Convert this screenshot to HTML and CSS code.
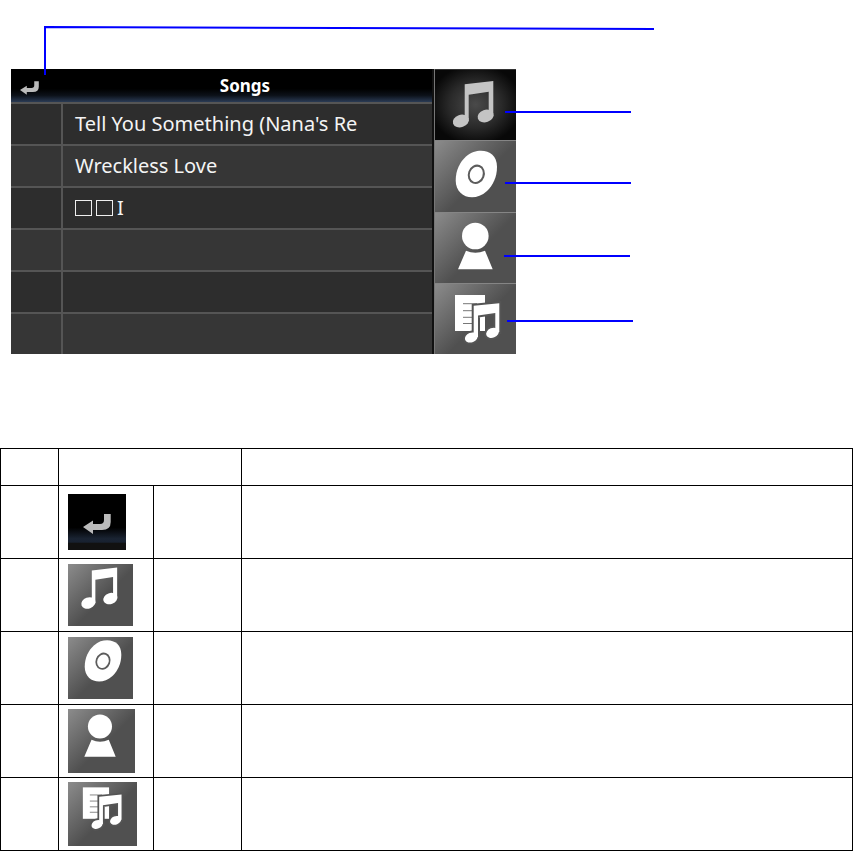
FILE: index.html
```html
<!DOCTYPE html>
<html lang="en">
<head>
<meta charset="utf-8">
<title>Songs</title>
<link rel="stylesheet" href="styles.css">
</head>
<body>
<svg class="sprite" aria-hidden="true">
  <defs>
    <g id="return">
      <path d="M0 13 10 6.5V10H17Q21 10 21 6V0H27.7V8Q27.7 16 19 16H10V20Z"/>
    </g>
    <g id="note">
      <path d="M29.7 15.3 58.3 12V47H53.7V22.7L33.7 25.7V52H29.7Z"/>
      <ellipse cx="25.8" cy="52" rx="8.2" ry="6.2" transform="rotate(-20 25.8 52)"/>
      <ellipse cx="50.6" cy="47" rx="8.2" ry="6.2" transform="rotate(-20 50.6 47)"/>
    </g>
    <g id="disc">
      <path d="M46 10.7C55 10.7 62 16 62 27C62 37 58 45 52 51C47 55.5 42 57.3 37 57.3C28 57.3 20.7 51 20.7 40.5C20.7 30 25 22 31 16.5C36 12 41 10.7 46 10.7Z"/>
      <ellipse class="ring" cx="41.3" cy="34.3" rx="7.4" ry="8.8" transform="rotate(20 41.3 34.3)"/>
    </g>
    <g id="person">
      <circle cx="40.3" cy="24" r="13.3"/>
      <path d="M31 38.7Q40.3 43 50 38.7L57.7 57.3H23Z"/>
    </g>
    <g id="playlist">
      <path d="M20 12H50V48H20Z"/>
      <path class="rule" d="M28 20.7H42M28 27.7H38M28 34.3H38M28 40.5H38"/>
      <g class="outline">
        <path d="M38.7 22.7 64.3 20.3V49H60.3V30L43 32.5V54H38.7Z"/>
        <ellipse cx="36.3" cy="54.5" rx="6.6" ry="4.8" transform="rotate(-22 36.3 54.5)"/>
        <ellipse cx="57.5" cy="49.8" rx="6.6" ry="4.8" transform="rotate(-22 57.5 49.8)"/>
      </g>
      <path d="M38.7 22.7 64.3 20.3V49H60.3V30L43 32.5V54H38.7Z"/>
      <ellipse cx="36.3" cy="54.5" rx="6.6" ry="4.8" transform="rotate(-22 36.3 54.5)"/>
      <ellipse cx="57.5" cy="49.8" rx="6.6" ry="4.8" transform="rotate(-22 57.5 49.8)"/>
    </g>
  </defs>
</svg>

<figure class="figure">
  <div class="device">
    <section class="screen">
      <header class="titlebar">
        <button class="back" type="button" aria-label="Back"><svg class="glyph back-icon" viewBox="0 0 28 20"><use href="#return"/></svg></button>
        <h1 class="title">Songs</h1>
      </header>
      <ul class="songs">
        <li class="song"><span class="name">Tell You Something (Nana's Re</span></li>
        <li class="song"><span class="name">Wreckless Love</span></li>
        <li class="song"><span class="name"><i class="box"></i><i class="box"></i>I</span></li>
        <li class="song"><span class="name"></span></li>
        <li class="song"><span class="name"></span></li>
        <li class="song"><span class="name"></span></li>
      </ul>
    </section>
    <nav class="tabs">
      <button class="tab active" type="button" aria-label="Songs"><svg class="glyph" viewBox="0 0 81 71"><use href="#note"/></svg></button>
      <button class="tab" type="button" aria-label="Albums"><svg class="glyph" viewBox="0 0 81 71"><use href="#disc"/></svg></button>
      <button class="tab" type="button" aria-label="Artists"><svg class="glyph" viewBox="0 0 81 71"><use href="#person"/></svg></button>
      <button class="tab" type="button" aria-label="Playlists"><svg class="glyph" viewBox="0 0 81 71"><use href="#playlist"/></svg></button>
    </nav>
  </div>
  <svg class="callouts" width="660" height="340" viewBox="0 0 660 340" aria-hidden="true">
    <path d="M45 75V27L654 29M505 112H631M505 183H631M504 256H630M507 321H633"/>
  </svg>
</figure>

<table class="legend">
  <colgroup><col class="c-no"><col class="c-icon"><col class="c-name"><col></colgroup>
  <thead>
    <tr><th></th><th colspan="2"></th><th></th></tr>
  </thead>
  <tbody>
    <tr><td></td><td><svg class="glyph key key-return" width="58" height="56" viewBox="0 0 58 56"><use href="#return" x="15" y="20"/></svg></td><td></td><td></td></tr>
    <tr><td></td><td><svg class="glyph key" width="65" height="62" viewBox="3 8 73 70"><use href="#note"/></svg></td><td></td><td></td></tr>
    <tr><td></td><td><svg class="glyph key" width="65" height="62" viewBox="2 7 73 70"><use href="#disc"/></svg></td><td></td><td></td></tr>
    <tr><td></td><td><svg class="glyph key" width="67" height="64" viewBox="5 5 74 70"><use href="#person"/></svg></td><td></td><td></td></tr>
    <tr><td></td><td><svg class="glyph key" width="69" height="64" viewBox="3 6 79 73"><use href="#playlist"/></svg></td><td></td><td></td></tr>
  </tbody>
</table>
</body>
</html>
```

FILE: styles.css
```css
* { box-sizing: border-box; }

body {
  margin: 0;
  background: #fff;
  font-family: "Noto Sans", "Open Sans", sans-serif;
}

.sprite { position: absolute; width: 0; height: 0; }

.glyph { display: block; fill: #fff; }
.ring { fill: none; stroke: #5c5c5c; stroke-width: 2; }
.rule { fill: none; stroke: #777; stroke-width: 1; }
.outline { fill: #555; stroke: #555; stroke-width: 4; }
.outline path { fill: none; }

.figure {
  position: relative;
  margin: 0;
  padding: 69px 11px 94px;
}

.device {
  display: grid;
  grid-template-columns: 1fr 82px;
  max-width: 505px;
  background: #111;
}

.screen { padding-right: 2px; }

.titlebar {
  display: flex;
  align-items: center;
  height: 33px;
  background: linear-gradient(#000 60%, #0c1119 80%, #2a3b55);
}

.back {
  width: 47px;
  padding: 4px 0 0 9px;
  border: 0;
  background: none;
}
.back-icon { width: 19px; height: 14px; fill: #bbb; }

.title {
  flex: 1;
  margin: 0;
  color: #fff;
  font-size: 17px;
  line-height: 33px;
  text-align: center;
}

.songs { margin: 0; padding: 0; list-style: none; }

.song {
  height: 42px;
  padding-left: 50px;
  border-top: 2px solid #555;
  background: #2d2d2d;
}
.song:nth-child(even) { background: #363636; }

.name {
  display: block;
  height: 40px;
  padding-left: 12px;
  border-left: 2px solid #555;
  color: #f4f4f4;
  font-size: 20px;
  line-height: 40px;
  white-space: nowrap;
}

.box {
  display: inline-block;
  width: 17px;
  height: 16px;
  margin: 0 4px 0 0;
  border: 1px solid #eee;
  vertical-align: -1px;
}

.tabs {
  display: grid;
  grid-template-rows: repeat(4, 1fr);
  border-left: 1px solid #777;
}

.tab {
  display: block;
  padding: 0;
  border: 0;
  background: linear-gradient(135deg, #8c8c8c, #505050 55%);
  box-shadow: inset 0 1px #858585;
}
.tab .glyph { width: 100%; }
.tab.active {
  background: radial-gradient(ellipse at center, #4a4a4a, #2a2a2a 45%, #080808 80%);
  box-shadow: inset 0 1px #333;
}
.tab.active .glyph { fill: #c4c4c4; }

.callouts {
  position: absolute;
  top: 0;
  left: 0;
  fill: none;
  stroke: #00f;
  stroke-width: 2;
}

.legend {
  width: 100%;
  border-collapse: collapse;
  table-layout: fixed;
}
.legend th, .legend td {
  padding: 0 0 0 9px;
  border: 1px solid #000;
  vertical-align: middle;
}
.legend th { height: 37px; }
.legend td { height: 73px; }
.c-no { width: 58px; }
.c-icon { width: 95px; }
.c-name { width: 88px; }

.key { background: linear-gradient(135deg, #8c8c8c, #505050 55%); }
.key-return {
  fill: #bbb;
  background: linear-gradient(#000 60%, #1a2433 80%, #182130 86%, #111 88%);
}
```
